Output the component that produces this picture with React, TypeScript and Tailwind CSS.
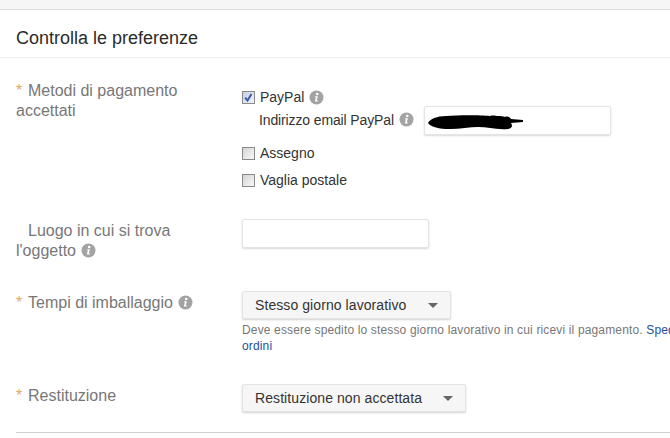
import React from "react";

function Info({ className = "" }: { className?: string }) {
  return (
    <svg width="15" height="15" viewBox="0 0 15 15" className={`inline-block shrink-0 ${className}`}>
      <circle cx="7.5" cy="7.5" r="7" fill="#a3a3a3" />
      <circle cx="8.2" cy="4" r="1.3" fill="#fff" />
      <path d="M6.2 6.3h2.6l-1 4.2h1v1H5.9l1-4.2h-.9z" fill="#fff" />
    </svg>
  );
}

function Star({ hidden }: { hidden?: boolean }) {
  return <span className={`inline-block w-[12px] ${hidden ? "invisible" : "text-[#e0a868]"}`}>*</span>;
}

function Check({ checked }: { checked?: boolean }) {
  return (
    <span className={`flex h-[13px] w-[13px] shrink-0 items-center justify-center border border-[#8a8a8a] bg-gradient-to-br ${checked ? "from-[#c4cfe6] to-[#f2f4fa]" : "from-[#d4d4d4] to-[#f8f8f8]"}`}>
      {checked && (
        <svg width="11" height="11" viewBox="0 0 11 11">
          <path d="M2.2 5.6l2.3 3 4-6.6" fill="none" stroke="#3b5bab" strokeWidth="2" />
        </svg>
      )}
    </span>
  );
}

function Select({ label, w }: { label: string; w: string }) {
  return (
    <div className={`flex h-[28px] items-center justify-between rounded-[2px] border border-[#e4e4e4] bg-[#f6f6f6] pl-[12px] pr-[12px] text-[14px] tracking-[0.08px] text-[#333] shadow-[0_1px_2px_rgba(0,0,0,0.18)] ${w}`}>
      <span>{label}</span>
      <span className="h-0 w-0 border-x-[5.5px] border-t-[5px] border-x-transparent border-t-[#666]" />
    </div>
  );
}

export default function App() {
  return (
    <div className="h-[438px] w-[670px] overflow-hidden bg-white font-['Liberation_Sans',Arial,sans-serif]">
      <div className="h-[10px] border-b border-[#dedede] bg-[#f6f6f6]" />
      <h2 className="flex h-[48px] items-center border-b border-[#ececec] pl-[16px] pt-[9px] text-[18px] leading-none text-[#2b2b2b]">
        Controlla le preferenze
      </h2>

      <div className="flex pl-[16px] pt-[23px]">
        <div className="w-[226px] shrink-0 pr-[20px] text-[16px] leading-[20px] text-[#777]">
          <Star />Metodi di pagamento accettati
        </div>
        <div className="pt-[8px] text-[14px] leading-[16px] text-[#333]">
          <div className="flex h-[16px] items-center">
            <Check checked />
            <span className="ml-[5px]">PayPal</span>
            <Info className="ml-[5px]" />
          </div>
          <div className="mt-[1px] flex items-center">
            <span className="ml-[17px] pb-[2px] tracking-[-0.13px]">Indirizzo email PayPal</span>
            <Info className="mb-[2px] ml-[5px]" />
            <div className="relative ml-[10px] h-[29px] w-[187px] rounded-[2px] border border-[#e4e4e4] bg-white shadow-[0_1px_2px_rgba(0,0,0,0.15)]">
              <svg width="100" height="17" viewBox="0 0 100 17" className="absolute left-[2px] top-[7px]">
                <path d="M1 9c2-4 9-7 18-7 12-1 34-1 44 0 3-1 6 0 8 0 3 0 5 0 7 1 2-1 5 0 6 2l12 1v2l-12 1c2 3 1 5-3 6-12 1-20-2-30-2-8 0-18 2-28 2C12 15 4 13 1 9z" fill="#000" />
              </svg>
            </div>
          </div>
          <div className="mt-[10px] flex h-[16px] items-center">
            <Check />
            <span className="ml-[5px]">Assegno</span>
          </div>
          <div className="mt-[11px] flex h-[16px] items-center">
            <Check />
            <span className="ml-[5px]">Vaglia postale</span>
          </div>
        </div>
      </div>

      <div className="mt-[31px] flex pl-[16px]">
        <div className="w-[226px] shrink-0 pr-[50px] pt-[2px] text-[16px] leading-[20px] text-[#777]">
          <Star hidden />Luogo in cui si trova l'oggetto <Info className="ml-[1px] align-[-2px]" />
        </div>
        <div className="h-[29px] w-[187px] rounded-[2px] border border-[#e4e4e4] bg-white shadow-[0_1px_2px_rgba(0,0,0,0.15)]" />
      </div>

      <div className="mt-[30px] flex pl-[16px]">
        <div className="w-[226px] shrink-0 pt-[2px] text-[16px] leading-[20px] text-[#777]">
          <Star />Tempi di imballaggio <Info className="ml-[1px] align-[-2px]" />
        </div>
        <div className="w-[470px] shrink-0">
          <Select label="Stesso giorno lavorativo" w="w-[209px]" />
          <p className="mt-[3px] text-[12px] leading-[16px] tracking-[0.15px] text-[#777]">
            Deve essere spedito lo stesso giorno lavorativo in cui ricevi il pagamento.{" "}
            <span className="text-[#1f4e9c]">Spedisci gli ordini</span>
          </p>
        </div>
      </div>

      <div className="mt-[30px] flex pl-[16px]">
        <div className="w-[226px] shrink-0 pt-[2px] text-[16px] leading-[20px] text-[#777]">
          <Star />Restituzione
        </div>
        <Select label="Restituzione non accettata" w="w-[224px]" />
      </div>

      <div className="ml-[16px] mt-[20px] border-t border-[#cfcfcf]" />
    </div>
  );
}
